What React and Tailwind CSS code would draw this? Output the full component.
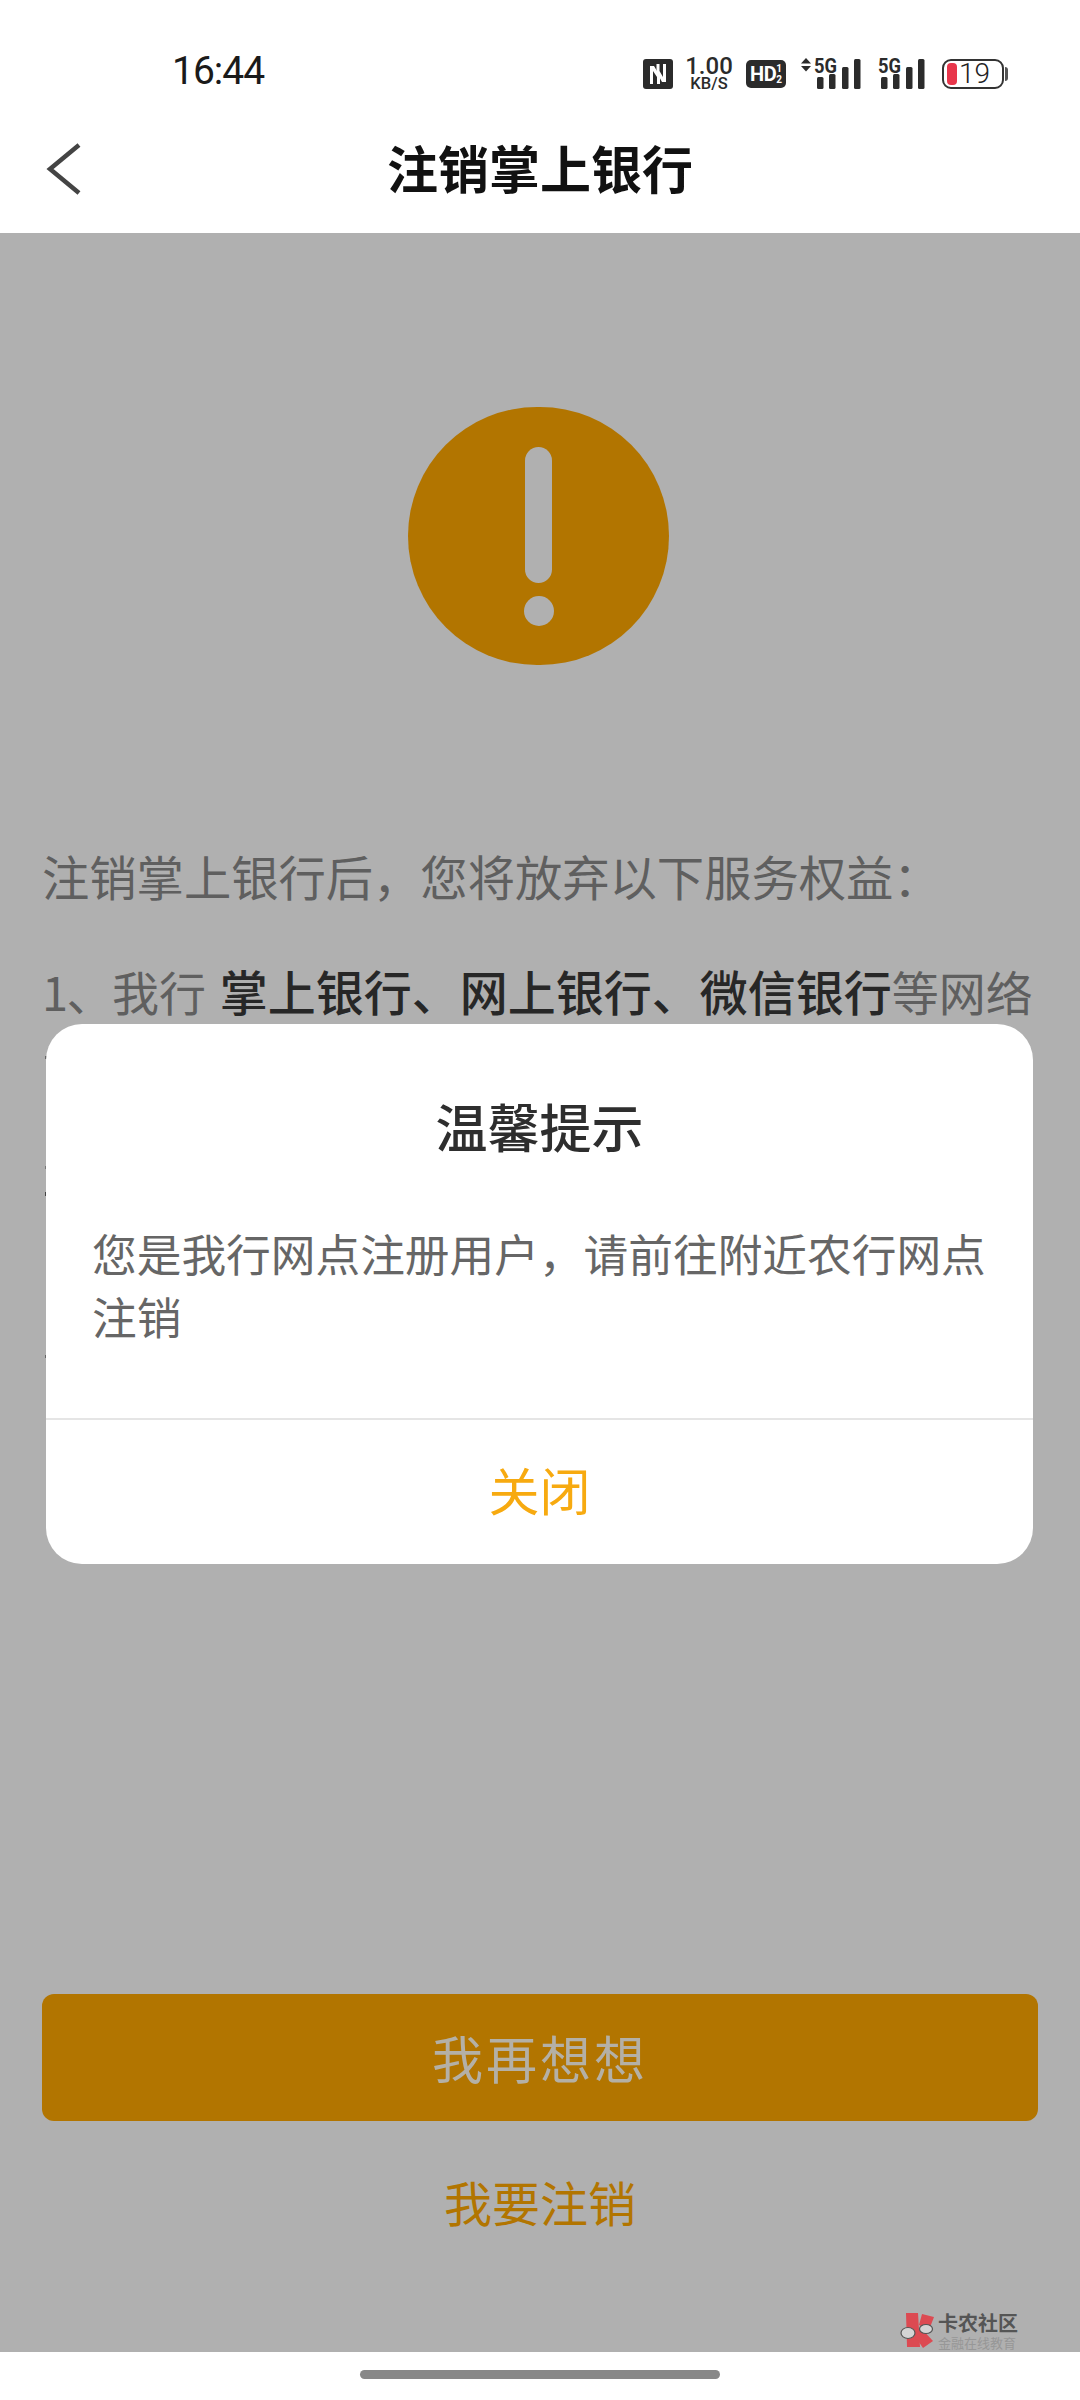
const cjk = "font-['Noto_Sans_CJK_SC',sans-serif]";

function NfcIcon() {
  return (
    <svg width="30" height="30" viewBox="0 0 30 30">
      <rect width="30" height="30" rx="3" fill="#2b2b2b" />
      <path d="M7 7 L11 7 L17 17 L17 25 L14 25 L14 18 L10 12 L10 25 L7 25 Z" fill="#fff" />
      <path d="M23 23 L19 23 L13.5 13 L13.5 5 L16.5 5 L16.5 12 L20 18 L20 5 L23 5 Z" fill="#fff" />
    </svg>
  );
}

function Signal({ arrows }) {
  const x = arrows ? 13 : 0;
  const w = arrows ? 60 : 47;
  return (
    <svg className="-mt-[6px]" width={w} height="38" viewBox={`0 -6 ${w} 38`}>
      {arrows && (
        <>
          <path d="M0 5.5 L5 0 L10 5.5 Z" fill="#2b2b2b" />
          <path d="M0 8 L5 13.5 L10 8 Z" fill="#2b2b2b" />
        </>
      )}
      <text x={x} y="15" fontSize="21" fontWeight="700" fontFamily="Roboto, sans-serif" fill="#2b2b2b" textLength="23" lengthAdjust="spacingAndGlyphs">
        5G
      </text>
      <rect x={x + 3} y="19" width="6.5" height="12" rx="1.5" fill="#2b2b2b" />
      <rect x={x + 15} y="16" width="6.5" height="15" rx="1.5" fill="#2b2b2b" />
      <rect x={x + 28} y="9" width="6.5" height="22" rx="1.5" fill="#2b2b2b" />
      <rect x={x + 40} y="1" width="6.5" height="30" rx="1.5" fill="#2b2b2b" />
    </svg>
  );
}

function Battery() {
  return (
    <div className="flex items-center ml-[17px]">
      <div className="w-[62px] h-[30px] rounded-[9px] border-2 border-[#333] flex items-center pl-[3px]">
        <div className="w-[10px] h-[22px] rounded-[4px] bg-[#e8364b]" />
        <span className="ml-[2px] text-[28px] leading-none font-['Roboto',sans-serif] font-light text-[#222]">19</span>
      </div>
      <div className="w-[3px] h-[14px] ml-[1px] rounded-r bg-[#555]" />
    </div>
  );
}

function StatusBar() {
  return (
    <div className="h-[100px] flex items-start pl-[172px] pr-[72px] pt-[50px]">
      <span className="text-[39px] leading-[43px] tracking-[-1px] font-['Roboto',sans-serif] text-[#1a1a1a]">16:44</span>
      <div className="ml-auto flex items-center mt-[7px] text-[#2b2b2b]">
        <NfcIcon />
        <div className="ml-[13px] w-[46px] flex flex-col items-center font-['Roboto',sans-serif] font-medium">
          <span className="text-[24px] leading-[19px]">1.00</span>
          <span className="text-[16.5px] leading-[14px] mt-[1px]">KB/S</span>
        </div>
        <div className="ml-[14px] w-[40px] h-[28px] rounded-[5px] bg-[#2b2b2b] flex items-center justify-center text-white font-['Roboto',sans-serif] font-bold">
          <span className="text-[20px] leading-none tracking-tight">HD</span>
          <span className="flex flex-col items-center text-[10px] leading-[11px]">
            <span>1</span>
            <span>2</span>
          </span>
        </div>
        <div className="ml-[15px] flex">
          <Signal arrows />
        </div>
        <div className="ml-[17px] flex">
          <Signal />
        </div>
        <Battery />
      </div>
    </div>
  );
}

function Header() {
  return (
    <div className="bg-white">
      <StatusBar />
      <div className="relative h-[133px] flex items-center justify-center">
        <svg className="absolute left-[46px] top-[43px]" width="36" height="52" viewBox="0 0 36 52">
          <path d="M33 2 L4 26 L33 50" fill="none" stroke="#444" strokeWidth="4.5" />
        </svg>
        <h1 className="text-[51px] leading-[60px] font-bold text-[#111]">注销掌上银行</h1>
      </div>
    </div>
  );
}

function WarningCircle() {
  return (
    <div className="mt-[174px] ml-[408px] w-[261px] h-[258px] rounded-full bg-[#b27500] flex flex-col items-center pt-[40px]">
      <div className="w-[27px] h-[136px] rounded-full bg-[#b0b0b0]" />
      <div className="mt-[13px] w-[30px] h-[30px] rounded-full bg-[#b0b0b0]" />
    </div>
  );
}

function Watermark() {
  return (
    <div className="absolute left-[900px] top-[2080px] flex">
      <svg width="36" height="36" viewBox="0 0 36 36">
        <path d="M6 0 L18 0 L20 34 L7 34 Z" fill="#dc4a52" />
        <path d="M22 1 L34 4 L29 17 L19 12 Z" fill="#dc4a52" />
        <path d="M21 15 L33 28 L23 35 L14 22 Z" fill="#dc4a52" />
        <ellipse cx="8" cy="20" rx="7" ry="5.5" fill="#d4d4d4" stroke="#555" strokeWidth="1.2" />
        <ellipse cx="26" cy="16" rx="6.5" ry="4.5" fill="#d4d4d4" stroke="#555" strokeWidth="1.2" />
      </svg>
      <div className="ml-[2px] flex flex-col items-start">
        <span className="text-[20px] leading-[20px] font-bold text-[#555]">卡农社区</span>
        <span className="mt-[3px] text-[13px] leading-[14px] text-[#979797]">金融在线教育</span>
      </div>
    </div>
  );
}

function Dialog() {
  return (
    <div className="absolute left-[46px] top-[791px] w-[987px] h-[540px] rounded-[36px] bg-white flex flex-col">
      <h2 className="mt-[72px] text-center text-[52px] leading-[60px] font-medium text-[#2e2e2e]">温馨提示</h2>
      <p className="mt-[65px] pl-[46px] pr-[40px] text-[44.7px] leading-[63px] text-[#666]">
        您是我行网点注册用户，请前往附近农行网点注销
      </p>
      <div className="mt-auto h-[2px] bg-[#e5e5e5]" />
      <div className="h-[144px] pb-[6px] flex items-center justify-center text-[51px] leading-none text-[#f7aa10]">关闭</div>
    </div>
  );
}

// edges of the text hidden behind the dialog, they just peek out on its left side
function HiddenTextEdges() {
  return (
    <>
      <div className="absolute left-[45px] top-[823px] w-[2px] h-[3px] bg-[#666]" />
      <div className="absolute left-[45px] top-[933px] w-[2px] h-[3px] bg-[#777]" />
      <div className="absolute left-[45px] top-[959px] w-[2px] h-[4px] bg-[#444]" />
      <div className="absolute left-[45px] top-[1122px] w-[2px] h-[3px] bg-[#666]" />
    </>
  );
}

export default function App() {
  return (
    <div className={`relative w-[1080px] h-[2400px] flex flex-col bg-white overflow-hidden ${cjk}`}>
      <Header />
      <div className="relative flex-1 flex flex-col bg-[#b0b0b0]">
        <WarningCircle />
        <p className="mt-[180px] pl-[42px] text-[47.3px] leading-[62px] text-[#5f5f5f]">注销掌上银行后，您将放弃以下服务权益：</p>
        <p className="mt-[52px] pl-[42px] text-[47px] leading-[62px] text-[#5f5f5f] whitespace-nowrap">
          <span className="tracking-[-1.5px]">1、</span>我行 <span className="ml-[3px] text-[48px] font-medium text-[#272727]">掌上银行、网上银行、微信银行</span>等网络
        </p>
        <button className="mt-[972px] mx-[42px] h-[127px] rounded-[12px] bg-[#b27500] text-[51px] tracking-[3px] text-[#b4b0a6]">我再想想</button>
        <div className="mt-[47px] text-center text-[48px] leading-[66px] text-[#b27500]">我要注销</div>
        <Watermark />
        <HiddenTextEdges />
        <Dialog />
      </div>
      <div className="h-[48px] flex justify-center pt-[18px]">
        <div className="w-[360px] h-[9px] rounded-full bg-[#888]" />
      </div>
    </div>
  );
}
